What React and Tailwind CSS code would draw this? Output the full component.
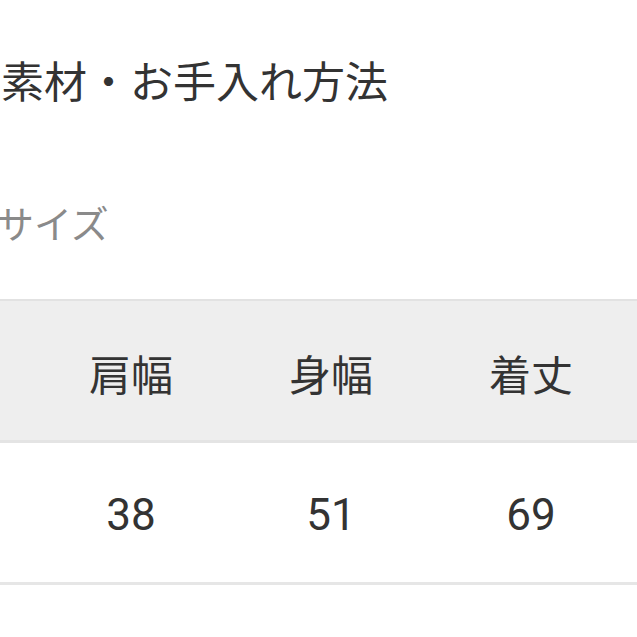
import React from "react";

const cols = [
  { label: "肩幅", value: "38" },
  { label: "身幅", value: "51" },
  { label: "着丈", value: "69" },
];

const App = () => {
  return (
    <div className="w-[637px] h-[637px] overflow-hidden bg-white font-['Roboto','Noto_Sans_CJK_JP',sans-serif]">
      <div className="pt-[51px] pl-[1px] h-[176px]">
        <h2 className="text-[43px] leading-[56px] text-[#333333] font-['Noto_Sans_CJK_JP',sans-serif] whitespace-nowrap">
          素材・お手入れ方法
        </h2>
      </div>

      <div className="h-[123px] ml-[-4px] pt-[21px]">
        <p className="text-[38px] leading-[50px] text-[#8a8a8a] font-['Noto_Sans_CJK_JP',sans-serif]">
          サイズ
        </p>
      </div>

      {/* size table */}
      <div className="border-t-[2px] border-[#e2e2e2]">
        <div className="flex h-[142px] items-center bg-[#eeeeee] border-b-[3px] border-[#e4e4e4]">
          <div className="w-[31px] shrink-0" />
          {cols.map((c) => (
            <div
              key={c.label}
              className="w-[200px] shrink-0 text-center text-[42px] text-[#333333] font-['Noto_Sans_CJK_JP',sans-serif] pt-[3px]"
            >
              {c.label}
            </div>
          ))}
        </div>
        <div className="flex h-[142px] items-center border-b-[3px] border-[#e6e6e6]">
          <div className="w-[31px] shrink-0" />
          {cols.map((c) => (
            <div
              key={c.value}
              className="w-[200px] shrink-0 text-center text-[44px] text-[#333333] font-['Roboto',sans-serif] pt-[4px]"
            >
              {c.value}
            </div>
          ))}
        </div>
      </div>
    </div>
  );
};

export default App;
